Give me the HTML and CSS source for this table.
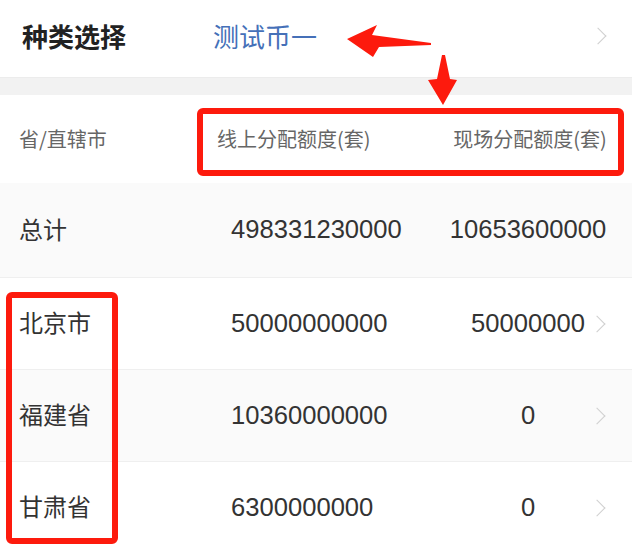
FILE: index.html
```html
<!DOCTYPE html>
<html lang="zh-CN">
<head>
  <meta charset="UTF-8" />
  <meta name="viewport" content="width=device-width, initial-scale=1.0"/>
  <title>额度分配</title>
  <link rel="stylesheet" href="styles.css">
</head>
<body>
  <div class="page">
    <header class="picker">
      <span class="picker-label">种类选择</span>
      <span class="picker-value">测试币一</span>
      <span class="chevron"></span>
    </header>

    <div class="gap"></div>

    <section class="table">
      <div class="head">
        <span>省/直辖市</span>
        <span>线上分配额度(套)</span>
        <span class="center">现场分配额度(套)</span>
      </div>

      <div class="row shade">
        <span class="name">总计</span>
        <span>498331230000</span>
        <span class="center">10653600000</span>
      </div>
      <div class="row">
        <span class="name">北京市</span>
        <span>50000000000</span>
        <span class="center">50000000</span>
        <span class="chevron"></span>
      </div>
      <div class="row shade">
        <span class="name">福建省</span>
        <span>10360000000</span>
        <span class="center">0</span>
        <span class="chevron"></span>
      </div>
      <div class="row">
        <span class="name">甘肃省</span>
        <span>6300000000</span>
        <span class="center">0</span>
        <span class="chevron"></span>
      </div>
    </section>

    <!-- annotations drawn over the screenshot -->
    <div class="mark mark-head"></div>
    <div class="mark mark-names"></div>
    <svg class="arrows" width="632" height="550" viewBox="0 0 632 550">
      <polygon points="347,39 377,25 372,35 431,43 431,45 379,47 373,57" fill="#fd1a0d"/>
      <polygon points="442,55 445,55 450,79 457,80 443,105 428,80 437,79" fill="#fd1a0d"/>
    </svg>
  </div>
</body>
</html>
```

FILE: styles.css
```css
* {
  box-sizing: border-box;
  margin: 0;
  padding: 0;
}

body {
  font-family: 'Liberation Sans', 'Noto Sans CJK SC', sans-serif;
  background: #fff;
  color: #333;
}

.page {
  position: relative;
  width: 632px;
  height: 550px;
  overflow: hidden;
}

.picker {
  display: grid;
  grid-template-columns: 191px 1fr auto;
  align-items: center;
  height: 77px;
  padding: 0 28px 5px 22px;
  line-height: 1;
}

.picker-label {
  font-family: 'Noto Sans CJK SC', sans-serif;
  font-weight: 700;
  font-size: 26px;
  color: #222;
}

.picker-value {
  font-family: 'Noto Sans CJK SC', sans-serif;
  font-size: 26px;
  color: #4570b8;
}

.gap {
  height: 18px;
  background: #f2f2f2;
  border-top: 1px solid #ececec;
}

.chevron {
  display: block;
  width: 12px;
  height: 12px;
  border-top: 1.5px solid #cfcfcf;
  border-right: 1.5px solid #cfcfcf;
  transform: rotate(45deg);
}

.head {
  display: grid;
  grid-template-columns: 198px 233px 160px 1fr;
  align-items: center;
  height: 88px;
  padding-left: 19px;
  font-size: 20px;
  color: #666;
  font-family: 'Noto Sans CJK SC', sans-serif;
  line-height: 1;
}

.row {
  display: grid;
  grid-template-columns: 212px 217px 160px 1fr;
  align-items: center;
  height: 92px;
  padding-left: 19px;
  font-size: 25.6px;
  line-height: 1;
  border-top: 1px solid #efefef;
}

.head + .row {
  height: 94px;
  border-top: none;
}

.row.shade {
  background: #fafafa;
}

.name {
  font-family: 'Noto Sans CJK SC', sans-serif;
  font-size: 24px;
  margin-top: -3px;
}

.center {
  grid-column: 3;
  grid-row: 1;
  text-align: center;
}

.row .chevron {
  grid-column: 3;
  grid-row: 1;
  justify-self: end;
  margin-right: 5px;
}

.mark {
  position: absolute;
  border: 6px solid #fd1a0d;
  border-radius: 6px;
}

.mark-head {
  left: 197px;
  top: 108px;
  width: 427px;
  height: 68px;
}

.mark-names {
  left: 6px;
  top: 292px;
  width: 112px;
  height: 252px;
}

.arrows {
  position: absolute;
  left: 0;
  top: 0;
}
```
